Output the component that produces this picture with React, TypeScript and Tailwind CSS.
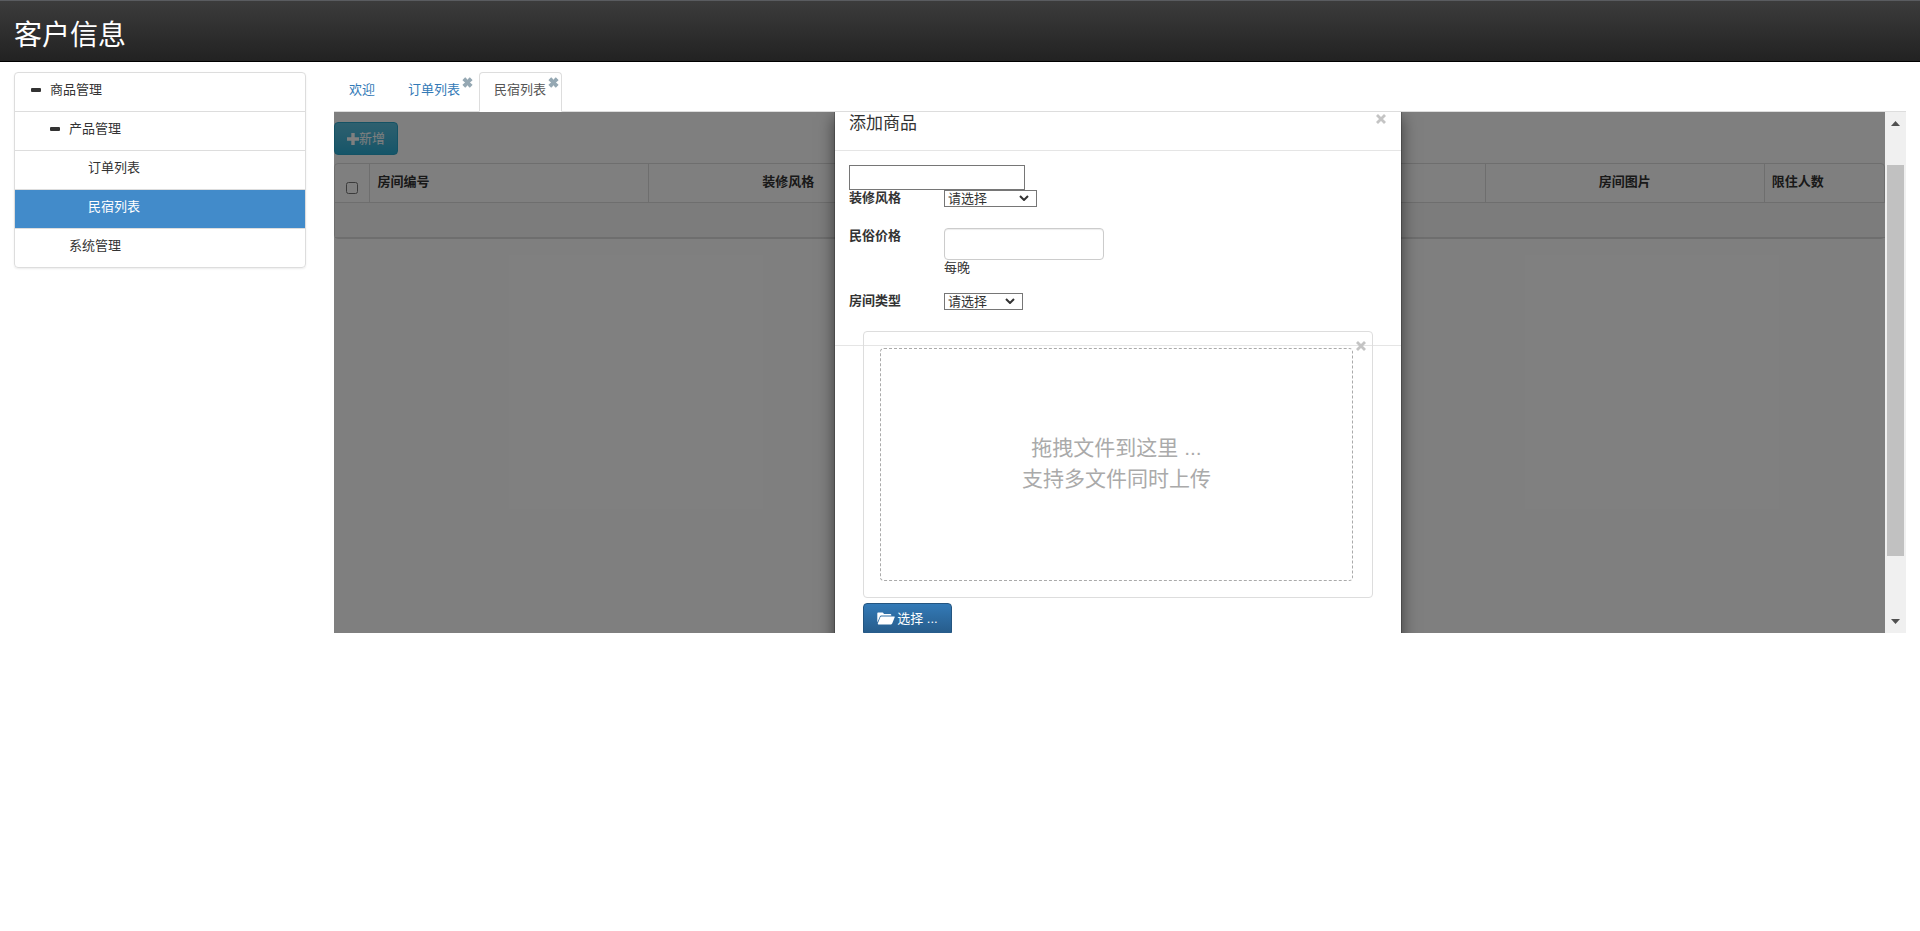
import React from 'react'

interface MenuItem {
  title: string
  level: number
  open?: boolean
  active?: boolean
}

interface Tab {
  title: string
  closable?: boolean
  active?: boolean
}

const menu: MenuItem[] = [
  { title: '商品管理', level: 0, open: true },
  { title: '产品管理', level: 1, open: true },
  { title: '订单列表', level: 2 },
  { title: '民宿列表', level: 2, active: true },
  { title: '系统管理', level: 1 },
]

const tabs: Tab[] = [
  { title: '欢迎' },
  { title: '订单列表', closable: true },
  { title: '民宿列表', closable: true, active: true },
]

const columns = [
  { title: '房间编号', align: 'text-left' },
  { title: '装修风格', align: 'text-center' },
  { title: '民俗价格', align: 'text-center' },
  { title: '房间类型', align: 'text-center' },
  { title: '房间图片', align: 'text-center' },
  { title: '限住人数', align: 'text-left' },
]

const RemoveIcon: React.FC<{ className?: string }> = ({ className }) => (
  <svg viewBox="0 0 12 12" className={className} fill="currentColor" aria-hidden="true">
    <path d="M3.2.6.8 2.9c-.3.3-.3.6 0 .8L3.3 6 .8 8.3c-.3.2-.3.5 0 .8l2.4 2.3c.2.2.5.2.8 0l2-2.3 2 2.3c.3.2.6.2.8 0l2.4-2.3c.3-.3.3-.6 0-.8L8.7 6l2.5-2.3c.3-.2.3-.5 0-.8L8.8.6c-.2-.2-.5-.2-.8 0L6 2.900 4 .6c-.3-.2-.6-.2-.8 0z" />
  </svg>
)

const CloseIcon = () => (
  <svg viewBox="0 0 10 10" className="h-[10px] w-[10px]" stroke="currentColor" strokeWidth="2.8" aria-hidden="true">
    <path d="M1 1l8 8M9 1L1 9" />
  </svg>
)

const FolderOpenIcon = () => (
  <svg viewBox="0 0 18 13" className="h-[13px] w-[18px]" fill="currentColor" aria-hidden="true">
    <path d="M.3 10.5V1.5C.3.8.8.6 1.3.6h4.200c.5 0 .8.2 1 .6l.4.8h6.500c.5 0 .9.4.9.9v.6H4.200c-.6 0-1 .3-1.200.8L.3 10.5z" />
    <path d="M4.300 4.400h12.800c.5 0 .8.4.6.9l-2.500 6.300c-.2.5-.6.8-1.100.8H1.300c-.5 0-.7-.3-.5-.8l2.600-6.500c.2-.5.5-.7.9-.7z" />
  </svg>
)

const Sidebar = () => (
  <aside className="w-1/6 px-[14px]">
    <ul className="divide-y divide-[#ddd] overflow-hidden rounded border border-[#ddd] shadow-[0_1px_2px_rgba(0,0,0,0.075)]">
      {menu.map((item) => (
        <li key={item.title}>
          <a
            href="#"
            className={`flex h-[38px] items-start pt-[7px] pl-4 leading-[19px] ${item.active ? 'bg-[#428bca] text-white' : 'text-[#333]'}`}
          >
            {Array.from({ length: item.level }, (_, i) => (
              <span key={i} className="w-[19px]" />
            ))}
            {item.level < 2 && item.open && (
              <span className="flex h-[19px] w-[19px] items-center">
                <span className="h-1 w-[10px] rounded-[1px] bg-[#333]" />
              </span>
            )}
            {!item.open && <span className="w-[19px]" />}
            {item.title}
          </a>
        </li>
      ))}
    </ul>
  </aside>
)

const TabBar = () => (
  <ul className="flex gap-[3px] border-b border-[#ddd]">
    {tabs.map((tab) => (
      <li key={tab.title} className="relative -mb-px">
        <a
          href="#"
          className={`block h-10 rounded-t border pt-[7px] pl-[14px] leading-[19px] ${tab.closable ? 'pr-[15px]' : 'pr-[14px]'} ${
            tab.active ? 'border-[#ddd] border-b-white bg-white text-[#555]' : 'border-transparent text-[#337ab7]'
          }`}
        >
          {tab.title}
        </a>
        {tab.closable && (
          <button aria-label="关闭" className="absolute top-[5px] right-[3px] text-[#95a8b3]">
            <RemoveIcon className="h-[11px] w-[11px]" />
          </button>
        )}
      </li>
    ))}
  </ul>
)

const RoomTable = () => (
  <div className="pt-[10px]">
    <button className="flex h-[33px] w-16 items-center justify-center rounded border border-[#28a4c9] bg-linear-to-b from-[#5bc0de] to-[#2aabd2] text-white">
      <svg viewBox="0 0 12 12" className="h-3 w-3" fill="currentColor" aria-hidden="true">
        <path d="M4.300 0h3.400v4.300H12v3.400H7.700V12H4.300V7.700H0V4.300h4.300z" />
      </svg>
      新增
    </button>
    <div className="mt-2 rounded border border-[#ddd]">
      <table className="w-[1708px] table-fixed border-collapse text-[#333]">
        <thead>
          <tr className="h-[38px] border-b border-[#ddd] align-top leading-[19px]">
            <th className="w-[35px] pt-[18px]">
              <input type="checkbox" aria-label="全选" className="mx-auto block h-3 w-3" />
            </th>
            {columns.map((col) => (
              <th key={col.title} className={`border-l border-[#ddd] px-[7px] pt-2 font-bold ${col.align}`}>
                {col.title}
              </th>
            ))}
          </tr>
        </thead>
        <tbody>
          <tr className="h-[35px] border-b border-[#ddd] bg-[#f9f9f9]">
            <td colSpan={7} />
          </tr>
        </tbody>
      </table>
    </div>
  </div>
)

const UploadBox = () => (
  <div className="px-[14px]">
    <div className="relative rounded border border-[#ddd] py-4 pr-[19px] pl-4">
      <button aria-label="移除" className="absolute top-[9px] right-[6px] text-[#c4c4c4]">
        <CloseIcon />
      </button>
      <div className="flex h-[233px] flex-col items-center justify-center rounded border border-dashed border-[#aaa] pb-1 text-[21px] leading-[31px] text-[#aaa]">
        <p>拖拽文件到这里 ...</p>
        <p>支持多文件同时上传</p>
      </div>
    </div>
    <button className="mt-[5px] flex h-[33px] w-[89px] items-center justify-center gap-[2px] rounded border border-[#245580] bg-linear-to-b from-[#337ab7] to-[#265a88] pb-[2px] text-white">
      <FolderOpenIcon />
      选择 ...
    </button>
  </div>
)

const SelectBox: React.FC<{ id: string; width: string }> = ({ id, width }) => (
  <div className={`relative h-[17px] ${width}`}>
    <select id={id} className="block h-full w-full appearance-none border border-[#767676] pl-[3px] leading-[15px]">
      <option>请选择</option>
    </select>
    <svg viewBox="0 0 10 6" className="pointer-events-none absolute top-[5px] right-2 h-[6px] w-[10px]" fill="none" stroke="#333" strokeWidth="2" aria-hidden="true">
      <path d="M1 1l4 4 4-4" />
    </svg>
  </div>
)

const AddModal = () => (
  <div className="absolute inset-0 flex items-start justify-center bg-black/50 pr-1">
    <div role="dialog" aria-label="添加商品" className="w-[568px] border-x border-black/20 bg-white bg-clip-padding text-[#333] shadow-[0_5px_15px_rgba(0,0,0,0.5)]">
      <div className="flex h-[39px] items-start justify-between border-b border-[#e5e5e5] pr-[15px] pl-[14px]">
        <h4 className="text-[17px] leading-6">添加商品</h4>
        <button aria-label="关闭" className="pt-[2px] text-[#c4c4c4]">
          <CloseIcon />
        </button>
      </div>
      <form className="p-[14px] leading-[15px]">
        <input type="text" aria-label="编号" className="block h-[25px] w-44 border border-[#767676] px-1" />
        <div className="mb-4 flex min-h-[22px] items-start">
          <label htmlFor="style" className="w-[95px] font-bold">装修风格</label>
          <SelectBox id="style" width="w-[93px]" />
        </div>
        <div className="mb-4 flex min-h-[49px] items-start">
          <label htmlFor="price" className="w-[95px] font-bold">民俗价格</label>
          <div>
            <input id="price" type="text" className="block h-8 w-40 rounded border border-[#ccc] px-3 shadow-[inset_0_1px_1px_rgba(0,0,0,0.075)]" />
            每晚
          </div>
        </div>
        <div className="mb-4 flex min-h-[22px] items-start">
          <label htmlFor="type" className="w-[95px] font-bold">房间类型</label>
          <SelectBox id="type" width="w-[79px]" />
        </div>
        {/* the uploader runs over the footer line */}
        <div className="h-0">
          <UploadBox />
        </div>
      </form>
      <div className="h-80 border-t border-[#e5e5e5]" />
    </div>
  </div>
)

const ScrollBar = () => (
  <div className="relative flex w-[21px] flex-col items-center bg-[#f0f0f0] py-[9px] text-[#505050]">
    <svg viewBox="0 0 9 5" className="h-[5px] w-[9px]" fill="currentColor" aria-hidden="true">
      <path d="M4.500 0L9 5H0z" />
    </svg>
    <div className="mt-[39px] mb-[63px] w-[17px] flex-1 bg-[#c1c1c1]" />
    <svg viewBox="0 0 9 5" className="h-[5px] w-[9px]" fill="currentColor" aria-hidden="true">
      <path d="M0 0h9L4.500 5z" />
    </svg>
  </div>
)

export default function App() {
  return (
    <div className="min-h-screen bg-white font-['Liberation_Sans','Noto_Sans_CJK_SC',sans-serif] text-[13px]">
      <header className="h-[62px] border-t border-b border-t-[#5a5c60] border-b-black bg-linear-to-b from-[#3c3c3c] to-[#222] px-[14px] pt-[15px]">
        <h1 className="text-[28px] leading-10 text-white">客户信息</h1>
      </header>
      <div className="flex items-start pt-[10px]">
        <Sidebar />
        <main className="w-5/6 px-[14px]">
          <TabBar />
          <div className="relative flex h-[521px] overflow-hidden">
            <div className="min-w-0 flex-1 overflow-hidden">
              <RoomTable />
            </div>
            <AddModal />
            <ScrollBar />
          </div>
        </main>
      </div>
    </div>
  )
}
